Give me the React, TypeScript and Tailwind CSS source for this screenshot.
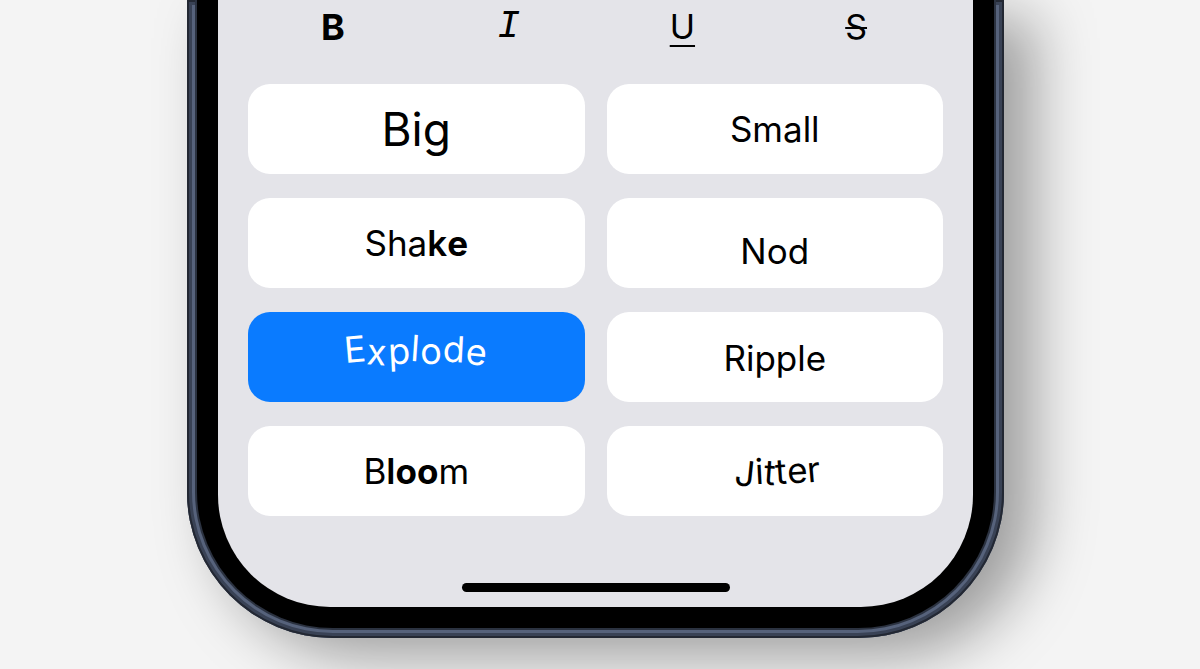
type Letter = { ch: string; cls: string };

// wobbly letters for the animated text styles
const explode: Letter[] = [
  { ch: "E", cls: "rotate-[-5deg] -translate-y-[1px]" },
  { ch: "x", cls: "rotate-[4deg] translate-y-[2px]" },
  { ch: "p", cls: "rotate-[-3deg] translate-y-[1px]" },
  { ch: "l", cls: "rotate-[4deg] -translate-y-[2px]" },
  { ch: "o", cls: "rotate-[-3deg] translate-y-[1px]" },
  { ch: "d", cls: "rotate-[3deg] -translate-y-[1px]" },
  { ch: "e", cls: "rotate-[6deg] translate-y-[2px]" },
];

const jitter: Letter[] = [
  { ch: "J", cls: "rotate-[6deg] translate-y-[2px]" },
  { ch: "i", cls: "rotate-[-3deg]" },
  { ch: "t", cls: "rotate-[4deg] translate-y-[1px]" },
  { ch: "t", cls: "rotate-[-4deg]" },
  { ch: "e", cls: "rotate-[-3deg] -translate-y-[1px]" },
  { ch: "r", cls: "rotate-[-5deg] -translate-y-[2px]" },
];

const Wobble = ({ letters, className }: { letters: Letter[]; className: string }) => (
  <span className={className}>
    {letters.map((l, i) => (
      <span key={i} className={`inline-block ${l.cls}`}>
        {l.ch}
      </span>
    ))}
  </span>
);

const Key = ({ children, active = false }: { children: React.ReactNode; active?: boolean }) => (
  <div
    className={`flex h-[90px] items-center justify-center rounded-[22px] ${active ? "bg-[#0a7bff] text-white" : "bg-white text-black"}`}
  >
    {children}
  </div>
);

export default function App() {
  return (
    <div
      className="h-[669px] w-[1200px] overflow-hidden bg-[#f4f4f4] pl-[187px]"
      style={{ fontFamily: "Inter, 'Noto Sans', sans-serif" }}
    >
      {/* titanium band */}
      <div className="h-[638px] w-[817px] rounded-b-[146px] bg-[#56627b] px-[10px] pb-[10px] shadow-[inset_0_0_0_2px_#232833,inset_0_0_0_5px_#394255,30px_18px_60px_rgba(0,0,0,0.36)]">
        {/* black bezel */}
        <div className="h-full rounded-b-[136px] bg-black px-[21px] pb-[21px] shadow-[0_0_0_2px_#2b3240]">
          {/* screen */}
          <div className="flex h-full flex-col rounded-b-[112px] bg-[#e4e4e9] px-[30px]">
            <div className="grid h-[52px] grid-cols-4 items-center pt-[2px] text-center text-black">
              <span className="-translate-x-[2px] text-[36px] font-bold leading-none">B</span>
              <span
                className="text-[38px] italic leading-none"
                style={{ fontFamily: "'Liberation Mono', monospace" }}
              >
                I
              </span>
              <span className="text-[34px] leading-none underline decoration-2 underline-offset-[6px]">U</span>
              <span className="text-[34px] leading-none line-through decoration-2">S</span>
            </div>

            <div className="mt-8 grid grid-cols-2 gap-x-[22px] gap-y-6">
              <Key>
                <span className="text-[46px] leading-none">Big</span>
              </Key>
              <Key>
                <span className="text-[35px] leading-none">Small</span>
              </Key>
              <Key>
                <span className="text-[35px] leading-none">
                  Sha<span className="font-semibold">k</span>
                  <span className="font-bold">e</span>
                </span>
              </Key>
              <Key>
                <span className="translate-y-[8px] text-[35px] leading-none">Nod</span>
              </Key>
              <Key active>
                <Wobble
                  letters={explode}
                  className="-translate-y-[7px] text-[36px] leading-none tracking-[1px]"
                />
              </Key>
              <Key>
                <span className="translate-y-[1px] text-[35px] leading-none">Ripple</span>
              </Key>
              <Key>
                <span className="text-[35px] leading-none">
                  B<span className="font-semibold">l</span>
                  <span className="font-bold">oo</span>m
                </span>
              </Key>
              <Key>
                <Wobble letters={jitter} className="translate-x-[3px] text-[35px] leading-none" />
              </Key>
            </div>

            <div className="mx-auto mb-[15px] mt-auto h-[9px] w-[268px] rounded-full bg-black" />
          </div>
        </div>
      </div>
    </div>
  );
}
